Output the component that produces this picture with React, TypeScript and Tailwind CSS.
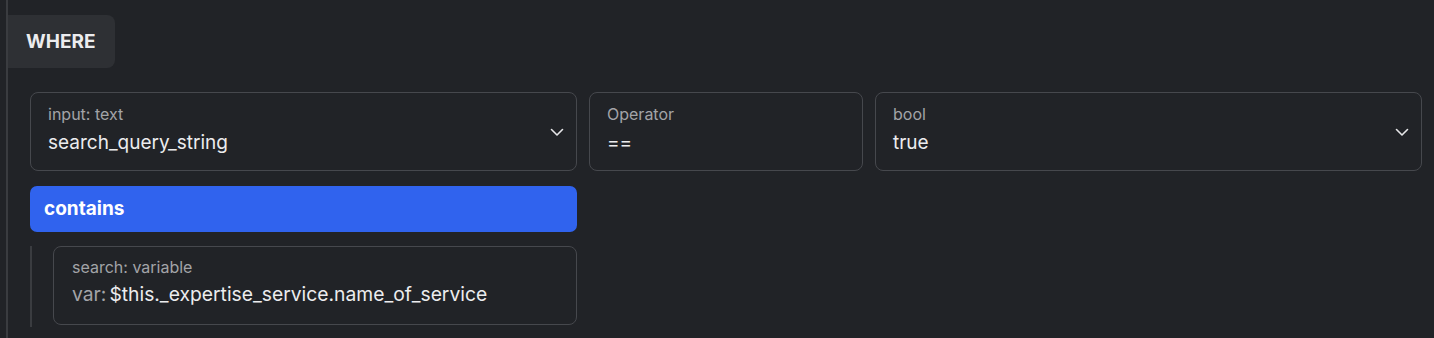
import React from "react";

const Chevron = () => (
  <svg width="14" height="14" viewBox="0 0 14 14" fill="none" className="shrink-0">
    <path d="M1.5 4.5 L7 10 L12.5 4.5" stroke="#e6e6e8" strokeWidth="1.6" strokeLinecap="round" strokeLinejoin="round" />
  </svg>
);

const Field = ({ label, value, chevron, w }: { label: string; value: React.ReactNode; chevron?: boolean; w: string }) => (
  <div className={`${w} h-[79px] rounded-[8px] border border-[#46484d] flex items-center pl-[17px] pr-[12px]`}>
    <div className="flex-1 flex flex-col pb-[4px]">
      <span className="text-[16px] leading-[20px] text-[#a3a4a8]">{label}</span>
      <span className="text-[19px] leading-[26px] text-[#ececee] mt-[6px]">{value}</span>
    </div>
    {chevron && <Chevron />}
  </div>
);

export default function App() {
  return (
    <div className="w-full h-[338px] bg-[#212327] pl-[6px] overflow-hidden" style={{ fontFamily: "Inter, 'Noto Sans', sans-serif" }}>
      <div className="h-full border-l-2 border-[#3a3c40] pt-[15px]">
        <div className="w-[107px] h-[53px] rounded-r-[8px] bg-[#2e3034] flex items-center pl-[18px] pt-[2px]">
          <span className="text-[19px] font-bold text-[#ececee]">WHERE</span>
        </div>
        <div className="ml-[22px] mt-[24px]">
          <div className="flex gap-[12px]">
            <Field w="w-[547px]" label="input: text" value="search_query_string" chevron />
            <Field w="w-[274px]" label="Operator" value="==" />
            <Field w="w-[547px]" label="bool" value="true" chevron />
          </div>
          <div className="mt-[15px] w-[547px] h-[46px] rounded-[7px] bg-[#3063ee] flex items-center pl-[14px]">
            <span className="text-[19px] font-bold text-white">contains</span>
          </div>
          <div className="mt-[14px] flex">
            <div className="w-[2px] h-[81px] bg-[#3a3c40]" />
            <div className="ml-[21px] w-[524px] h-[79px] rounded-[8px] border border-[#46484d] flex flex-col justify-center pl-[18px] pb-[7px]">
              <span className="text-[16px] leading-[20px] text-[#a3a4a8]">search: variable</span>
              <span className="text-[19.3px] leading-[26px] text-[#ececee] mt-[4px]">
                <span className="text-[#a3a4a8] mr-[3px]">var:</span>$this._expertise_service.name_of_service
              </span>
            </div>
          </div>
        </div>
      </div>
    </div>
  );
}
